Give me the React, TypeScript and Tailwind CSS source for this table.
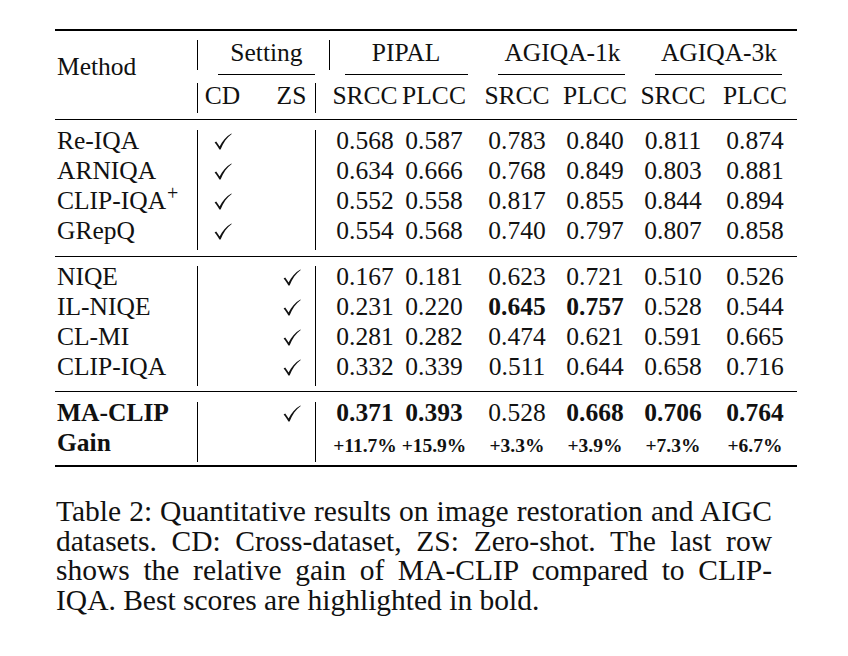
const serif = { fontFamily: '"Liberation Serif", "Times New Roman", serif' };

type RowData = {
  name: string;
  cd?: boolean;
  zs?: boolean;
  vals: string[];
  bold?: number[];
  nameBold?: boolean;
  plus?: boolean;
  small?: boolean;
};

// column boxes chosen so each number sits on its measured centre
const cols = ["w-[98px]", "w-[40px]", "w-[126px]", "w-[30px]", "w-[126px]", "w-[38px]"];

const groups: RowData[][] = [
  [
    { name: "Re-IQA", cd: true, vals: ["0.568", "0.587", "0.783", "0.840", "0.811", "0.874"] },
    { name: "ARNIQA", cd: true, vals: ["0.634", "0.666", "0.768", "0.849", "0.803", "0.881"] },
    { name: "CLIP-IQA", plus: true, cd: true, vals: ["0.552", "0.558", "0.817", "0.855", "0.844", "0.894"] },
    { name: "GRepQ", cd: true, vals: ["0.554", "0.568", "0.740", "0.797", "0.807", "0.858"] },
  ],
  [
    { name: "NIQE", zs: true, vals: ["0.167", "0.181", "0.623", "0.721", "0.510", "0.526"] },
    { name: "IL-NIQE", zs: true, vals: ["0.231", "0.220", "0.645", "0.757", "0.528", "0.544"], bold: [2, 3] },
    { name: "CL-MI", zs: true, vals: ["0.281", "0.282", "0.474", "0.621", "0.591", "0.665"] },
    { name: "CLIP-IQA", zs: true, vals: ["0.332", "0.339", "0.511", "0.644", "0.658", "0.716"] },
  ],
  [
    { name: "MA-CLIP", nameBold: true, zs: true, vals: ["0.371", "0.393", "0.528", "0.668", "0.706", "0.764"], bold: [0, 1, 3, 4, 5] },
    { name: "Gain", nameBold: true, small: true, vals: ["+11.7%", "+15.9%", "+3.3%", "+3.9%", "+7.3%", "+6.7%"], bold: [0, 1, 2, 3, 4, 5] },
  ],
];

const Check = () => (
  <svg width="18" height="17" viewBox="0 0 18 17" className="mt-[3px]">
    <path
      d="M0.6 9.6 L2.2 8.6 C3.4 10.2 4.6 12 5.6 13.6 C8.2 8 12 3.6 17.4 0.4 L17.7 0.9 C12.8 4.6 9.2 9.6 6.6 16.6 L5.4 16.6 C3.9 13.8 2.3 11.6 0.6 9.6 Z"
      fill="#111"
    />
  </svg>
);

const Row = ({ r }: { r: RowData }) => (
  <div className="flex h-[30px] leading-[22px]">
    <div className={`w-[142px] pl-[2px] ${r.nameBold ? "font-bold" : ""}`}>
      {r.name}
      {r.plus && <span className="relative -top-[9px] ml-[1px] text-[20px] leading-none">+</span>}
    </div>
    <div className="w-[50px] border-l border-black flex justify-center">{r.cd && <Check />}</div>
    <div className="w-[69px] pl-[21px] border-r border-black flex justify-center">{r.zs && <Check />}</div>
    {r.vals.map((v, i) => (
      <div
        key={i}
        className={`${cols[i]} flex justify-center whitespace-nowrap ${r.bold?.includes(i) ? "font-bold" : ""} ${
          r.small ? "text-[19.5px] leading-[27px]" : ""
        }`}
      >
        {v}
      </div>
    ))}
  </div>
);

export default function App() {
  return (
    <div className="min-h-[656px] w-[848px] bg-white text-[#111] text-[25.5px]" style={serif}>
      <div className="ml-[55px] w-[742px] pt-[29px]">
        <div className="h-[2px] bg-black" />

        {/* header */}
        <div className="flex">
          <div className="w-[142px] pl-[2px] pt-[23px] leading-[26px]">Method</div>
          <div className="flex flex-col">
            <div className="mt-[9px] flex h-[30px] leading-[26px]">
              <div className="w-[133px] border-l border-r border-black pl-[6px] flex justify-center">Setting</div>
              <div className="w-[152px] flex justify-center">PIPAL</div>
              <div className="w-[161px] flex justify-center">AGIQA-1k</div>
              <div className="w-[152px] flex justify-center">AGIQA-3k</div>
            </div>
            <div className="mt-[4px] flex h-[1px]">
              <div className="ml-[21px] w-[97px] bg-black" />
              <div className="ml-[30px] w-[123px] bg-black" />
              <div className="ml-[30px] w-[127px] bg-black" />
              <div className="ml-[30px] w-[127px] bg-black" />
            </div>
            <div className="mt-[8px] flex h-[30px] leading-[26px]">
              <div className="w-[50px] border-l border-black flex justify-center">CD</div>
              <div className="w-[69px] pl-[21px] border-r border-black flex justify-center">ZS</div>
              <div className="w-[98px] flex justify-center">SRCC</div>
              <div className="w-[40px] flex justify-center">PLCC</div>
              <div className="w-[126px] flex justify-center">SRCC</div>
              <div className="w-[30px] flex justify-center">PLCC</div>
              <div className="w-[126px] flex justify-center">SRCC</div>
              <div className="w-[38px] flex justify-center">PLCC</div>
            </div>
          </div>
        </div>
        <div className="mt-[6px] h-[1px] bg-black" />

        <div className="pt-[10px] pb-[6px]">
          {groups[0].map((r) => (
            <Row key={r.name} r={r} />
          ))}
        </div>
        <div className="h-[1px] bg-black" />
        <div className="pt-[9px] pb-[5px]">
          {groups[1].map((r) => (
            <Row key={r.name} r={r} />
          ))}
        </div>
        <div className="h-[1px] bg-black" />
        <div className="pt-[10px] pb-[3px]">
          {groups[2].map((r) => (
            <Row key={r.name} r={r} />
          ))}
        </div>
        <div className="h-[2px] bg-black" />

        {/* caption */}
        <div className="mt-[30px] ml-[1px] w-[716px] text-[29.5px] leading-[29.7px]">
          <p className="whitespace-nowrap [word-spacing:-1.5px] text-justify [text-align-last:justify]">
            Table 2: Quantitative results on image restoration and AIGC
          </p>
          <p className="text-justify [text-align-last:justify]">
            datasets. CD: Cross-dataset, ZS: Zero-shot. The last row
          </p>
          <p className="text-justify [text-align-last:justify]">
            shows the relative gain of MA-CLIP compared to CLIP-
          </p>
          <p>IQA. Best scores are highlighted in bold.</p>
        </div>
      </div>
    </div>
  );
}
